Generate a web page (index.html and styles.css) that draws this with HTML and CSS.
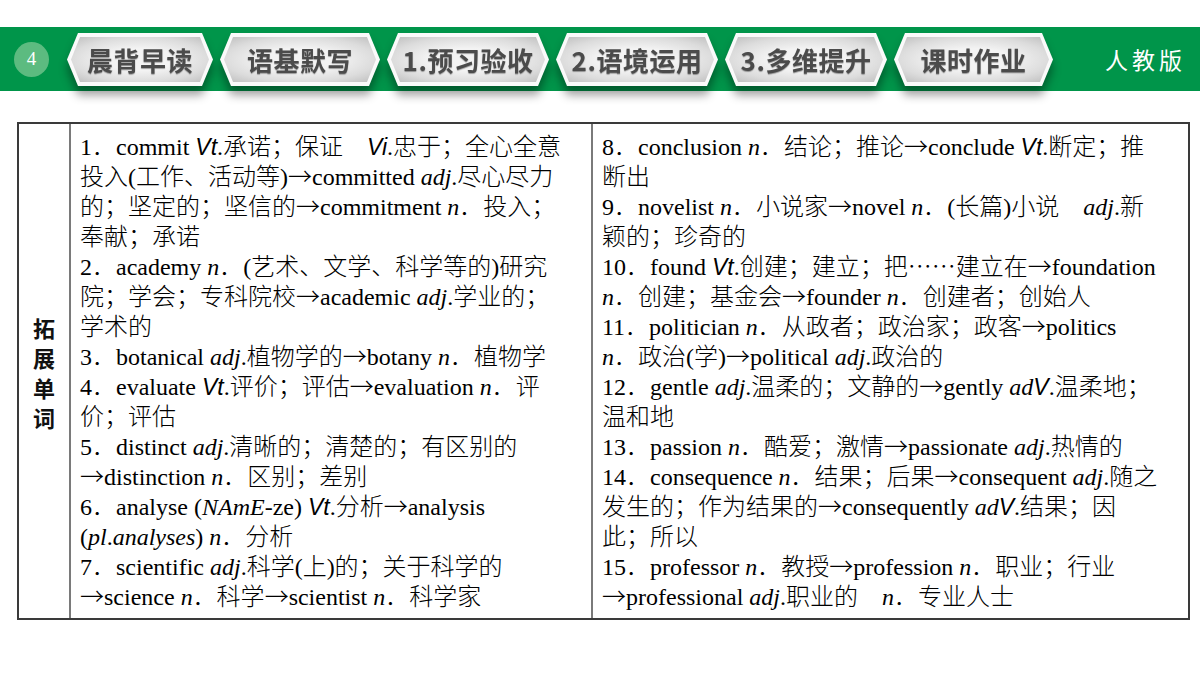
FILE: index.html
```html
<!DOCTYPE html>
<html lang="zh-CN">
<head>
<meta charset="utf-8">
<title>拓展单词</title>
<link rel="stylesheet" href="styles.css">
</head>
<body>
<header class="bar">
  <div class="num">4</div>
  <nav class="tabs">
    <div class="tabwrap"><div class="tab"><div class="tab-in">晨背早读</div></div></div>
    <div class="tabwrap"><div class="tab"><div class="tab-in">语基默写</div></div></div>
    <div class="tabwrap"><div class="tab"><div class="tab-in">1.预习验收</div></div></div>
    <div class="tabwrap"><div class="tab"><div class="tab-in">2.语境运用</div></div></div>
    <div class="tabwrap"><div class="tab"><div class="tab-in">3.多维提升</div></div></div>
    <div class="tabwrap"><div class="tab"><div class="tab-in">课时作业</div></div></div>
  </nav>
  <div class="edition">人教版</div>
</header>

<section class="table">
  <div class="head"><span class="hc">拓</span><span class="hc">展</span><span class="hc">单</span><span class="hc">词</span></div>
  <div class="col">
    <div class="ln">1．commit <span class="v">Vt</span>.承诺；保证　<span class="v">Vi</span>.忠于；全心全意</div>
    <div class="ln">投入(工作、活动等)<span class="cj">→</span>committed <i>adj</i>.尽心尽力</div>
    <div class="ln">的；坚定的；坚信的<span class="cj">→</span>commitment <i>n</i>．投入；</div>
    <div class="ln">奉献；承诺</div>
    <div class="ln">2．academy <i>n</i>．(艺术、文学、科学等的)研究</div>
    <div class="ln">院；学会；专科院校<span class="cj">→</span>academic <i>adj</i>.学业的；</div>
    <div class="ln">学术的</div>
    <div class="ln">3．botanical <i>adj</i>.植物学的<span class="cj">→</span>botany <i>n</i>．植物学</div>
    <div class="ln">4．evaluate <span class="v">Vt</span>.评价；评估<span class="cj">→</span>evaluation <i>n</i>．评</div>
    <div class="ln">价；评估</div>
    <div class="ln">5．distinct <i>adj</i>.清晰的；清楚的；有区别的</div>
    <div class="ln"><span class="cj">→</span>distinction <i>n</i>．区别；差别</div>
    <div class="ln">6．analyse (<i>NAmE</i>-ze) <span class="v">Vt</span>.分析<span class="cj">→</span>analysis</div>
    <div class="ln">(<i>pl</i>.<i>analyses</i>) <i>n</i>．分析</div>
    <div class="ln">7．scientific <i>adj</i>.科学(上)的；关于科学的</div>
    <div class="ln"><span class="cj">→</span>science <i>n</i>．科学<span class="cj">→</span>scientist <i>n</i>．科学家</div>
  </div>
  <div class="col">
    <div class="ln">8．conclusion <i>n</i>．结论；推论<span class="cj">→</span>conclude <span class="v">Vt</span>.断定；推</div>
    <div class="ln">断出</div>
    <div class="ln">9．novelist <i>n</i>．小说家<span class="cj">→</span>novel <i>n</i>．(长篇)小说　<i>adj</i>.新</div>
    <div class="ln">颖的；珍奇的</div>
    <div class="ln">10．found <span class="v">Vt</span>.创建；建立；把<span class="cj">……</span>建立在<span class="cj">→</span>foundation</div>
    <div class="ln"><i>n</i>．创建；基金会<span class="cj">→</span>founder <i>n</i>．创建者；创始人</div>
    <div class="ln">11．politician <i>n</i>．从政者；政治家；政客<span class="cj">→</span>politics</div>
    <div class="ln"><i>n</i>．政治(学)<span class="cj">→</span>political <i>adj</i>.政治的</div>
    <div class="ln">12．gentle <i>adj</i>.温柔的；文静的<span class="cj">→</span>gently <i>ad</i><span class="v">V</span>.温柔地；</div>
    <div class="ln">温和地</div>
    <div class="ln">13．passion <i>n</i>．酷爱；激情<span class="cj">→</span>passionate <i>adj</i>.热情的</div>
    <div class="ln">14．consequence <i>n</i>．结果；后果<span class="cj">→</span>consequent <i>adj</i>.随之</div>
    <div class="ln">发生的；作为结果的<span class="cj">→</span>consequently <i>ad</i><span class="v">V</span>.结果；因</div>
    <div class="ln">此；所以</div>
    <div class="ln">15．professor <i>n</i>．教授<span class="cj">→</span>profession <i>n</i>．职业；行业</div>
    <div class="ln"><span class="cj">→</span>professional <i>adj</i>.职业的　<i>n</i>．专业人士</div>
  </div>
</section>
</body>
</html>
```

FILE: styles.css
```css
* { box-sizing: border-box; }
html, body { margin: 0; padding: 0; background: #fff; }
body {
  width: 1200px;
  height: 675px;
  overflow: hidden;
  font-family: "Liberation Serif", "Noto Sans CJK SC", serif;
}

.bar {
  margin-top: 27px;
  height: 64px;
  background: #00954a;
  display: flex;
  align-items: center;
  padding-left: 14px;
  padding-right: 14px;
}

.num {
  width: 35px;
  height: 35px;
  border-radius: 50%;
  background: #5cbb80;
  color: #fff;
  font-family: "Liberation Serif", serif;
  font-size: 19px;
  display: flex;
  align-items: center;
  justify-content: center;
  margin-right: 18px;
}

.tabs {
  display: grid;
  grid-template-columns: 146px 160px 162px 162px 162px 159px;
  column-gap: 7px;
  margin-top: 1px;
}

.tabwrap {
  filter: drop-shadow(0 9px 5px rgba(0, 0, 0, 0.38));
}

.tab {
  height: 53px;
  background: #fafafa;
  padding: 4px;
  clip-path: polygon(11px 0, calc(100% - 11px) 0, 100% 50%, calc(100% - 11px) 100%, 11px 100%, 0 50%);
}

.tab-in {
  height: 100%;
  clip-path: polygon(9px 0, calc(100% - 9px) 0, 100% 50%, calc(100% - 9px) 100%, 9px 100%, 0 50%);
  background: radial-gradient(ellipse at center, #f3f3f3 35%, #dcdcdc 70%, #bdbdbd 100%);
  display: flex;
  align-items: center;
  justify-content: center;
  font-family: "Noto Sans CJK SC", sans-serif;
  font-weight: 700;
  font-size: 26px;
  color: #4b4b4b;
  text-shadow: 0 1px 1px rgba(0, 0, 0, 0.35);
  letter-spacing: 0.5px;
}

.edition {
  margin-left: auto;
  color: #fff;
  font-family: "Noto Sans CJK SC", serif;
  font-size: 23px;
  letter-spacing: 4px;
}

.table {
  margin: 31px 0 0 17px;
  width: 1173px;
  height: 498px;
  border: 2px solid #3a3a3a;
  display: grid;
  grid-template-columns: 50px 522px 597px;
}

.head {
  display: flex;
  flex-direction: column;
  align-items: center;
  justify-content: center;
  font-family: "Noto Sans CJK SC", sans-serif;
  font-weight: 700;
  font-size: 22px;
  color: #111;
  padding-top: 2px;
}

.hc {
  display: block;
  height: 30px;
  line-height: 30px;
}

.col {
  border-left: 2px solid #7a7a7a;
  padding: 8px 0 6px 9px;
  font-size: 24px;
  line-height: 30px;
  color: #000;
  font-weight: 300;
}

.ln {
  white-space: nowrap;
  height: 30px;
}

.ln i { font-style: italic; }

.cj {
  font-family: "Noto Sans CJK SC", sans-serif;
  display: inline-block;
  height: 24px;
  line-height: 24px;
}

.v {
  font-family: "Liberation Sans", sans-serif;
  font-style: italic;
  font-size: 23px;
  line-height: 0;
}
```
